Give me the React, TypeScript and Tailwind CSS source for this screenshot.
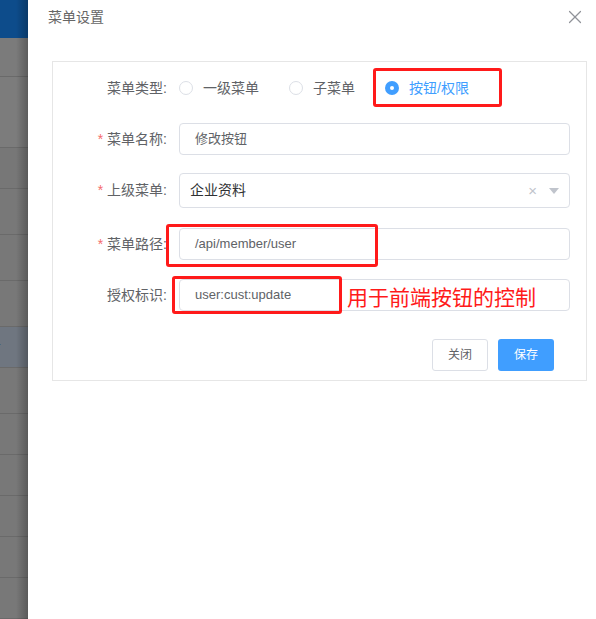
import { X } from "lucide-react"

const font = "font-['Liberation_Sans','Noto_Sans_CJK_SC',sans-serif]"

function Label({ text, required }: { text: string; required?: boolean }) {
  return (
    <div className="w-[126px] shrink-0 pr-[12px] text-right text-[14px] text-[#606266]">
      {required && <span className="mr-[4px] text-[#f56c6c]">*</span>}
      {text}:
    </div>
  )
}

function Radio({ text, checked }: { text: string; checked?: boolean }) {
  return (
    <div className="mr-[30px] flex items-center gap-[10px]">
      {checked ? (
        <span className="flex h-[14px] w-[14px] items-center justify-center rounded-full bg-[#409eff]">
          <span className="h-[4px] w-[4px] rounded-full bg-white" />
        </span>
      ) : (
        <span className="h-[14px] w-[14px] rounded-full border border-[#dcdfe6] bg-white" />
      )}
      <span className={checked ? "text-[14px] text-[#409eff]" : "text-[14px] text-[#606266]"}>{text}</span>
    </div>
  )
}

function Input({ value }: { value: string }) {
  return (
    <div className="flex h-[32px] flex-1 items-center rounded-[4px] border border-[#dcdfe6] pl-[15px] text-[13px] text-[#606266]">
      {value}
    </div>
  )
}

// page rows behind the drawer mask
const stripRows = [
  { h: "h-[39px]", bg: "bg-[#7b7b7b]" },
  { h: "h-[71px]", bg: "bg-[#7c7c7c]" },
  { h: "h-[41px]", bg: "bg-[#777777]" },
  { h: "h-[46px]", bg: "bg-[#787878]" },
  { h: "h-[46px]", bg: "bg-[#787878]" },
  { h: "h-[46px]", bg: "bg-[#787878]" },
  { h: "h-[41px]", bg: "bg-[#6f7680]", text: "r" },
  { h: "h-[46px]", bg: "bg-[#787878]" },
  { h: "h-[41px]", bg: "bg-[#787878]" },
  { h: "h-[41px]", bg: "bg-[#787878]" },
  { h: "h-[41px]", bg: "bg-[#787878]" },
  { h: "h-[41px]", bg: "bg-[#787878]" },
  { h: "h-[41px]", bg: "bg-[#787878]" },
]

export default function App() {
  return (
    <div className={`relative flex h-[619px] w-[596px] overflow-hidden bg-white ${font}`}>
      {/* background page under the mask */}
      <div className="relative flex w-[28px] shrink-0 flex-col">
        <div className="h-[40px] bg-[#0d4c8b]" />
        {stripRows.map((r, i) => (
          <div
            key={i}
            className={`${r.h} ${r.bg} flex shrink-0 items-center border-b border-[#6a6a6a] text-[13px] text-[#1e3a5f]`}
          >
            {r.text && <span className="-ml-[4px]">{r.text}</span>}
          </div>
        ))}
        <div className="absolute inset-y-0 right-0 w-[12px] bg-gradient-to-r from-transparent to-black/25" />
      </div>

      {/* drawer */}
      <div className="flex flex-1 flex-col bg-white">
        <div className="flex h-[34px] items-center justify-between pl-[20px] pr-[10px]">
          <span className="text-[14px] text-[#666666]">菜单设置</span>
          <X className="h-[22px] w-[22px] text-[#909399]" strokeWidth={1.3} />
        </div>

        <div className="pl-[24px] pr-[9px] pt-[27px]">
          <div className="flex flex-col border border-[#e6e6e6] pb-[9px] pl-0 pr-[16px] pt-[10px]">
            <div className="flex h-[32px] items-center">
              <Label text="菜单类型" />
              <Radio text="一级菜单" />
              <Radio text="子菜单" />
              <Radio text="按钮/权限" checked />
            </div>

            <div className="mt-[19px] flex items-center">
              <Label text="菜单名称" required />
              <Input value="修改按钮" />
            </div>

            <div className="mt-[18px] flex items-center">
              <Label text="上级菜单" required />
              <div className="flex h-[35px] flex-1 items-center rounded-[4px] border border-[#dcdfe6] pl-[10px] pr-[10px] text-[14px] text-[#303133]">
                <span className="flex-1">企业资料</span>
                <span className="mr-[12px] text-[15px] leading-none text-[#c0c4cc]">×</span>
                <span className="h-0 w-0 border-x-[5px] border-t-[6px] border-x-transparent border-t-[#c0c4cc]" />
              </div>
            </div>

            <div className="mt-[20px] flex items-center">
              <Label text="菜单路径" required />
              <Input value="/api/member/user" />
            </div>

            <div className="mt-[19px] flex items-center">
              <Label text="授权标识" />
              <Input value="user:cust:update" />
            </div>

            <div className="mt-[28px] flex justify-end gap-[10px] pr-[16px]">
              <button className="h-[32px] w-[56px] rounded-[3px] border border-[#dcdfe6] bg-white text-[12px] text-[#606266]">
                关闭
              </button>
              <button className="h-[32px] w-[56px] rounded-[3px] bg-[#409eff] text-[12px] text-white">
                保存
              </button>
            </div>
          </div>
        </div>
      </div>

      {/* annotations drawn over the screenshot */}
      <div className="absolute left-[373px] top-[68px] h-[39px] w-[129px] rounded-[3px] border-[3px] border-[#ff1a1a]" />
      <div className="absolute left-[166px] top-[224px] h-[43px] w-[212px] rounded-[3px] border-[3px] border-[#ff1a1a]" />
      <div className="absolute left-[172px] top-[276px] h-[38px] w-[170px] rounded-[3px] border-[3px] border-[#ff1a1a]" />
      <div className="absolute left-[347px] top-[284px] text-[21px] leading-[28px] text-[#ff1a1a]">用于前端按钮的控制</div>
    </div>
  )
}
